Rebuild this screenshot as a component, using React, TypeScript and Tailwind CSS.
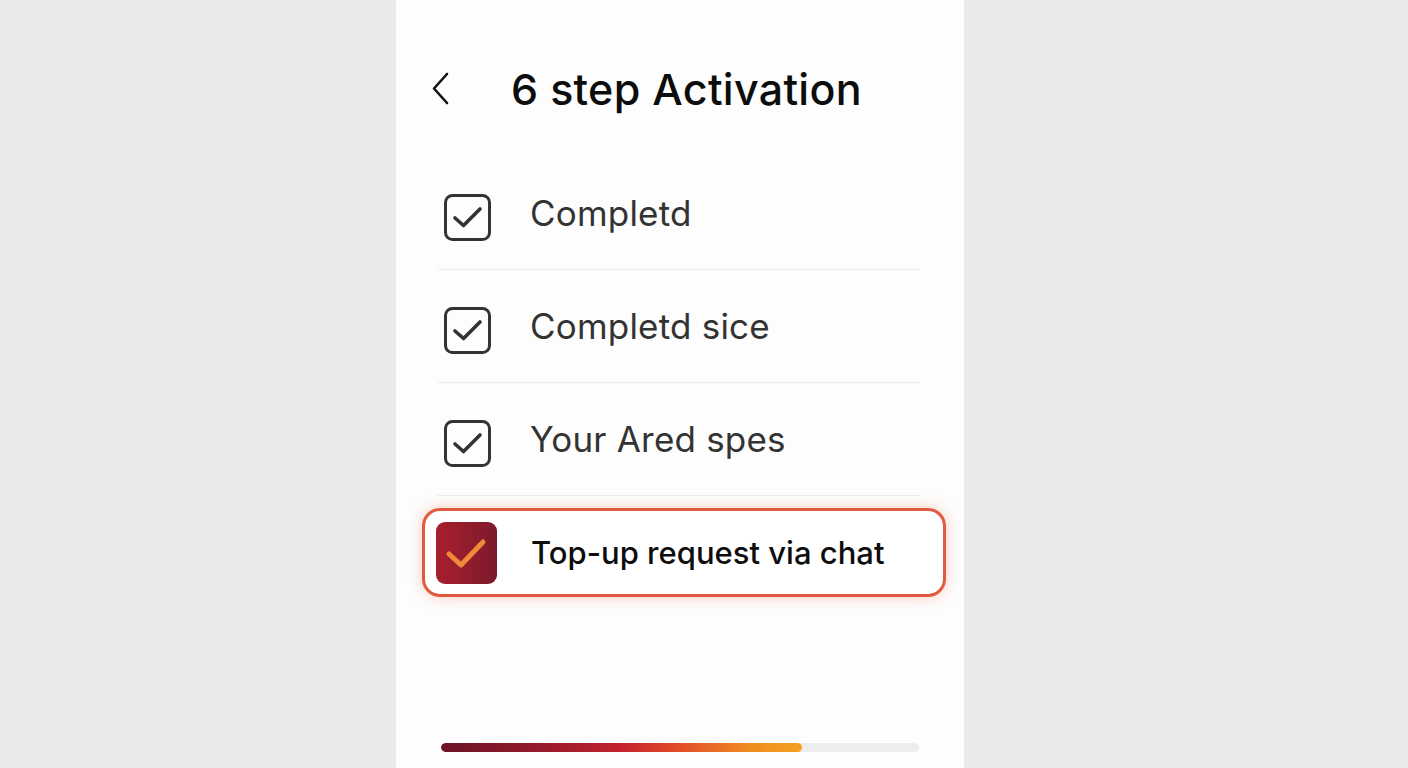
import React from "react";

function CheckBox() {
  return (
    <svg width="47" height="47" viewBox="0 0 47 47" className="shrink-0">
      <rect x="1.5" y="1.5" width="44" height="44" rx="7" fill="none" stroke="#333333" strokeWidth="3" />
      <path d="M11 24 L19.5 31.5 L36 15" fill="none" stroke="#333333" strokeWidth="3.6" strokeLinecap="round" strokeLinejoin="round" />
    </svg>
  );
}

function Row({ label }: { label: string }) {
  return (
    <div className="h-[113px] pt-[37px] border-b border-[#ececec] flex items-start">
      <div className="ml-[6px] flex items-center">
        <CheckBox />
        <span className="ml-[39px] mb-[8px] text-[35px] text-[#333333] font-normal leading-none tracking-[0.2px]">{label}</span>
      </div>
    </div>
  );
}

export default function App() {
  return (
    <div className="min-h-screen bg-[#eaeaea] font-['Inter',sans-serif]">
      <div className="ml-[396px] w-[568px] h-[768px] bg-[#fdfdfd] flex flex-col">
        <div className="mt-[49px] h-[80px] flex items-center">
          <svg width="24" height="36" viewBox="0 0 24 36" className="ml-[36px]">
            <path d="M15 3 L2 17.5 L15 32" fill="none" stroke="#111111" strokeWidth="2.6" strokeLinecap="round" strokeLinejoin="round" />
          </svg>
          <h1 className="ml-[55px] text-[43px] font-medium text-[#0d0d0d] leading-none tracking-[0.3px]">6 step Activation</h1>
        </div>
        <div className="mt-[28px] ml-[42px] w-[482px] flex flex-col">
          <Row label="Completd" />
          <Row label="Completd sice" />
          <Row label="Your Ared spes" />
        </div>
        <div className="mt-[12px] ml-[26px] w-[524px] h-[89px] rounded-[18px] border-[3px] border-[#e05a40] bg-white shadow-[0_0_14px_rgba(240,110,70,0.35)] flex items-center">
          <div className="ml-[11px] w-[61px] h-[62px] rounded-[9px] bg-gradient-to-r from-[#a81f2e] to-[#7c1a2b] flex items-center justify-center">
            <svg width="61" height="62" viewBox="0 0 61 62">
              <path d="M13 32 L25 43 L47 20" fill="none" stroke="#f2883a" strokeWidth="5" strokeLinecap="round" strokeLinejoin="round" />
            </svg>
          </div>
          <span className="ml-[34px] text-[31px] font-medium text-[#0d0d0d] leading-none">Top-up request via chat</span>
        </div>
        <div className="mt-[146px] ml-[45px] w-[478px] h-[9px] rounded-full bg-[#ededed] overflow-hidden">
          <div className="h-full w-[361px] rounded-full bg-[linear-gradient(to_right,#6a1424,#9a1b2e_30%,#c4232f_50%,#e04a28_65%,#f08a22_85%,#f5a21f)]" />
        </div>
      </div>
    </div>
  );
}
